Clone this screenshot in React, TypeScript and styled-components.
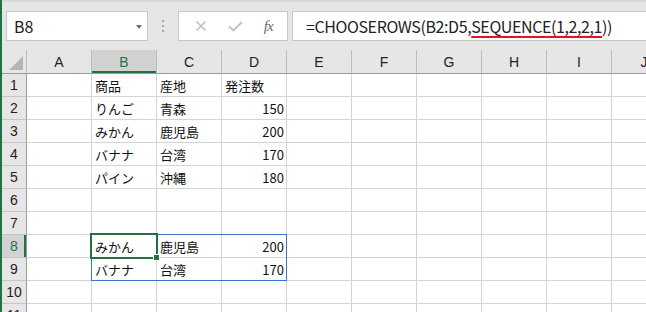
import React from 'react';
import styled, { createGlobalStyle } from 'styled-components';

const GlobalStyle = createGlobalStyle`
  html, body {
    margin: 0;
    padding: 0;
    background: #ffffff;
    overflow: hidden;
  }
  body {
    font-family: 'Noto Sans CJK JP', 'Noto Sans', sans-serif;
  }
`;

const Window = styled.div`
  width: 644px;
  height: 312px;
  border-left: 2px solid #217346;
  overflow: hidden;
  background: #ffffff;
`;

const Toolbar = styled.div`
  box-sizing: border-box;
  height: 50px;
  display: flex;
  align-items: stretch;
  padding: 9px 0 9px 4px;
  background: #e6e6e6;
  border-top: 2px solid #d9d9d9;
`;

const Box = styled.div`
  box-sizing: border-box;
  height: 30px;
  background: #ffffff;
  border: 1px solid #c6c6c6;
  display: flex;
  align-items: center;
`;

const NameBox = styled(Box)`
  width: 142px;
  padding: 0 5px 0 7px;
  justify-content: space-between;
  font-size: 16px;
  color: #222222;
`;

const Caret = styled.span`
  width: 0;
  height: 0;
  border-left: 3.5px solid transparent;
  border-right: 3.5px solid transparent;
  border-top: 4px solid #707070;
  margin-top: 1px;
`;

const Grip = styled.div`
  width: 30px;
  display: flex;
  flex-direction: column;
  align-items: center;
  justify-content: center;
  gap: 3px;

  span {
    width: 2px;
    height: 2px;
    background: #a6a6a6;
  }
`;

const FxButtons = styled(Box)`
  width: 110px;
  justify-content: space-around;
  padding: 0 4px 0 6px;
`;

const FxLabel = styled.span`
  font-family: 'Liberation Serif', serif;
  font-style: italic;
  font-size: 15px;
  color: #6a6a6a;
  letter-spacing: -1px;
`;

const FormulaInput = styled(Box)`
  flex: 1;
  margin-left: 4px;
  padding-left: 13px;
  border-right: none;
  font-size: 16px;
  letter-spacing: -0.4px;
  color: #222222;
  white-space: nowrap;
`;

const Squiggle = styled.span`
  text-decoration: underline;
  text-decoration-color: #e81123;
  text-decoration-thickness: 2px;
  text-underline-offset: 3px;
`;

const Sheet = styled.div`
  position: relative;
  display: grid;
  grid-template-columns: 25px repeat(10, 65px);
  grid-template-rows: 24px repeat(11, 23px);
`;

const Corner = styled.div`
  box-sizing: border-box;
  position: relative;
  background: #e6e6e6;
  border-right: 1px solid #bcbcbc;
  border-bottom: 1px solid #9b9b9b;

  &::after {
    content: '';
    position: absolute;
    right: 3px;
    bottom: 3px;
    border-left: 14px solid transparent;
    border-bottom: 14px solid #b5b5b5;
  }
`;

const ColHead = styled.div<{ $active?: boolean }>`
  box-sizing: border-box;
  display: flex;
  align-items: center;
  justify-content: center;
  background: ${p => (p.$active ? '#d2d2d2' : '#e6e6e6')};
  border-right: 1px solid #bcbcbc;
  border-bottom: 1px solid #9b9b9b;
  box-shadow: ${p => (p.$active ? 'inset 0 -2px 0 #217346' : 'none')};
  color: ${p => (p.$active ? '#217346' : '#222222')};
  font-family: 'Liberation Sans', sans-serif;
  font-size: 14px;
  padding-top: 1px;
`;

const RowHead = styled.div<{ $active?: boolean }>`
  box-sizing: border-box;
  display: flex;
  align-items: center;
  justify-content: center;
  background: ${p => (p.$active ? '#d2d2d2' : '#e6e6e6')};
  border-right: 1px solid #9b9b9b;
  border-bottom: 1px solid #c6c6c6;
  box-shadow: ${p => (p.$active ? 'inset -2px 0 0 #217346' : 'none')};
  color: ${p => (p.$active ? '#217346' : '#222222')};
  font-family: 'Liberation Sans', sans-serif;
  font-size: 14px;
`;

const Cell = styled.div<{ $num?: boolean }>`
  box-sizing: border-box;
  display: flex;
  align-items: center;
  justify-content: ${p => (p.$num ? 'flex-end' : 'flex-start')};
  padding: 1px 2px 0 3px;
  border-right: 1px solid #d4d4d4;
  border-bottom: 1px solid #d4d4d4;
  font-size: 13px;
  color: #111111;
  white-space: nowrap;
  overflow: hidden;
`;

const ActiveCell = styled.div`
  position: absolute;
  left: 88px;
  top: 183px;
  width: 68px;
  height: 26px;
  box-sizing: border-box;
  border: 2px solid #217346;
  z-index: 2;
`;

const FillHandle = styled.div`
  position: absolute;
  left: 151px;
  top: 204px;
  width: 7px;
  height: 7px;
  box-sizing: border-box;
  background: #217346;
  border: 1px solid #ffffff;
  z-index: 3;
`;

const SpillRange = styled.div`
  position: absolute;
  left: 89px;
  top: 184px;
  width: 196px;
  height: 47px;
  box-sizing: border-box;
  border: 1px solid #3e74d1;
  z-index: 1;
`;

const columns = ['A', 'B', 'C', 'D', 'E', 'F', 'G', 'H', 'I', 'J'];

type Row = [string, string, string, string];

const data: Record<number, Row> = {
  1: ['', '商品', '産地', '発注数'],
  2: ['', 'りんご', '青森', '150'],
  3: ['', 'みかん', '鹿児島', '200'],
  4: ['', 'バナナ', '台湾', '170'],
  5: ['', 'パイン', '沖縄', '180'],
  8: ['', 'みかん', '鹿児島', '200'],
  9: ['', 'バナナ', '台湾', '170'],
};

const CrossIcon = () => (
  <svg width="12" height="12" viewBox="0 0 12 12">
    <path d="M1.5 1.5 L10.5 10.5 M10.5 1.5 L1.5 10.5" stroke="#c2c2c2" strokeWidth="1.6" fill="none" />
  </svg>
);

const CheckIcon = () => (
  <svg width="15" height="11" viewBox="0 0 15 11">
    <path d="M1 5.5 L5.5 9.5 L14 1" stroke="#c2c2c2" strokeWidth="2" fill="none" />
  </svg>
);

const App: React.FC = () => {
  const rows = Array.from({ length: 11 }, (_, i) => i + 1);

  return (
    <>
      <GlobalStyle />
      <Window>
        <Toolbar>
          <NameBox>
            <span>B8</span>
            <Caret />
          </NameBox>
          <Grip>
            <span />
            <span />
            <span />
          </Grip>
          <FxButtons>
            <CrossIcon />
            <CheckIcon />
            <FxLabel>fx</FxLabel>
          </FxButtons>
          <FormulaInput>
            =CHOOSEROWS(B2:D5,<Squiggle>SEQUENCE(1,2,2,1</Squiggle>))
          </FormulaInput>
        </Toolbar>

        <Sheet>
          <Corner />
          {columns.map(c => (
            <ColHead key={c} $active={c === 'B'}>{c}</ColHead>
          ))}
          {rows.map(r => (
            <React.Fragment key={r}>
              <RowHead $active={r === 8}>{r}</RowHead>
              {columns.map((c, ci) => {
                const value = data[r] && ci < 4 ? data[r][ci] : '';
                return (
                  <Cell key={c} $num={ci === 3 && r > 1}>
                    {value}
                  </Cell>
                );
              })}
            </React.Fragment>
          ))}
          <SpillRange />
          <ActiveCell />
          <FillHandle />
        </Sheet>
      </Window>
    </>
  );
};

export default App;
